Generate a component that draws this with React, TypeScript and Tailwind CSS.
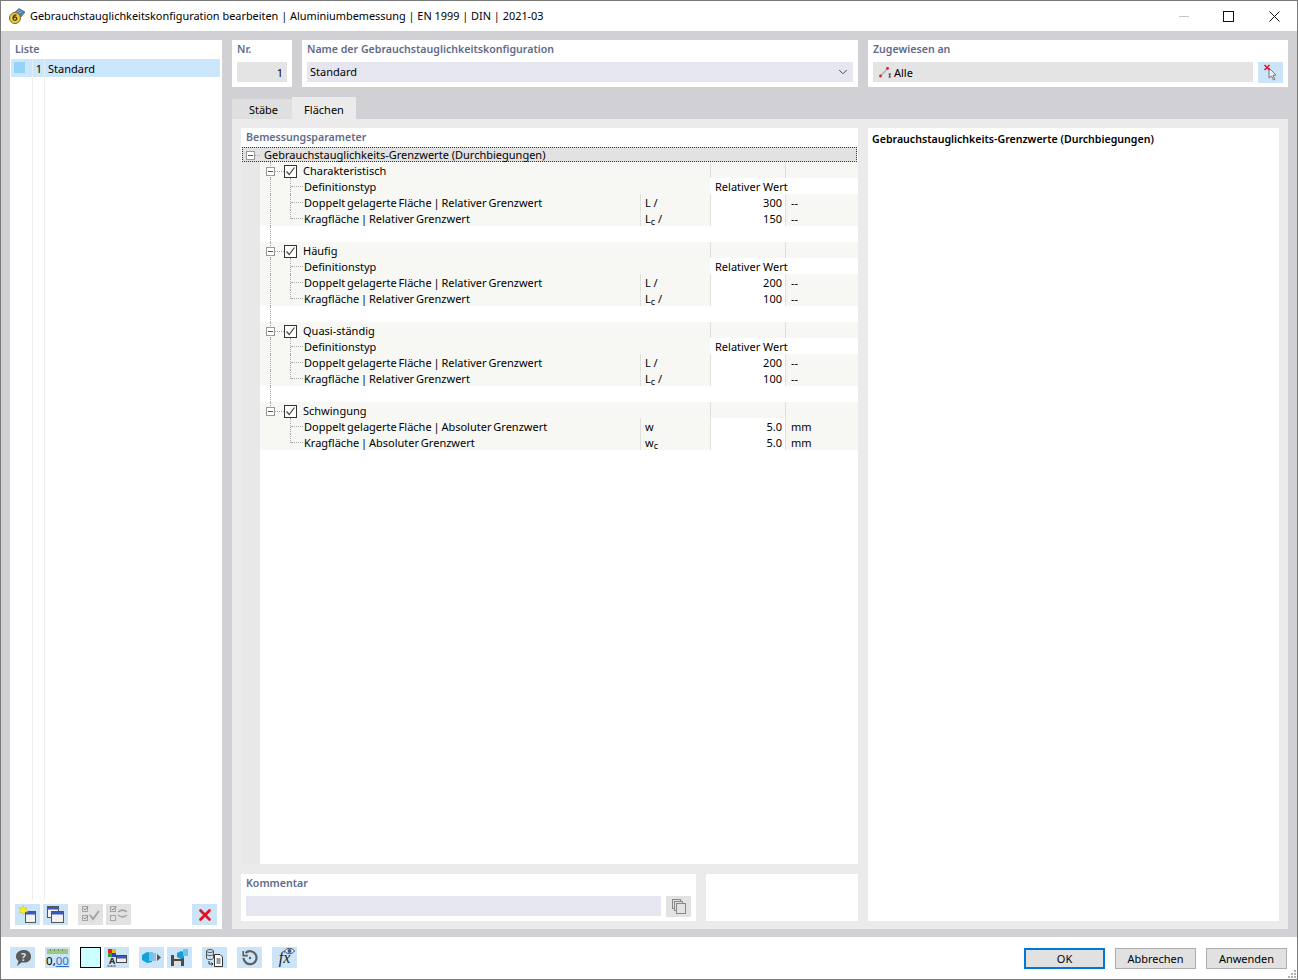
import type { ReactNode } from 'react';
import { ChevronDown, X } from 'lucide-react';

type ParamRow = { label: string; unit?: ReactNode; value?: string; suffix?: string; wide?: boolean };
type Group = { title: string; rows: ParamRow[]; last?: boolean };

const relative = (a: string, b: string): ParamRow[] => [
  { label: 'Definitionstyp', value: 'Relativer Wert', wide: true },
  { label: 'Doppelt gelagerte Fläche | Relativer Grenzwert', unit: 'L /', value: a, suffix: '--' },
  { label: 'Kragfläche | Relativer Grenzwert', unit: <>L<sub className="text-[9px] leading-none">c</sub> /</>, value: b, suffix: '--' },
];

const groups: Group[] = [
  { title: 'Charakteristisch', rows: relative('300', '150') },
  { title: 'Häufig', rows: relative('200', '100') },
  { title: 'Quasi-ständig', rows: relative('200', '100') },
  {
    title: 'Schwingung',
    last: true,
    rows: [
      { label: 'Doppelt gelagerte Fläche | Absoluter Grenzwert', unit: 'w', value: '5.0', suffix: 'mm' },
      { label: 'Kragfläche | Absoluter Grenzwert', unit: <>w<sub className="text-[9px] leading-none">c</sub></>, value: '5.0', suffix: 'mm' },
    ],
  },
];

function PlusBox() {
  return (
    <span className="flex h-[9px] w-[9px] shrink-0 items-center justify-center border border-[#9a9a9a] bg-white">
      <span className="h-px w-[5px] bg-[#555]" />
    </span>
  );
}

function Check() {
  return (
    <span className="flex h-[13px] w-[13px] shrink-0 items-center justify-center border border-[#333] bg-white">
      <svg width="11" height="11" viewBox="0 0 11 11" fill="none" stroke="#444" strokeWidth="1.2">
        <path d="M1.5 5.5 L4.2 8.5 L9.5 1.5" />
      </svg>
    </span>
  );
}

function GroupRow({ title, last }: { title: string; last?: boolean }) {
  return (
    <div className="relative flex h-4 bg-[#f7f8f3]">
      <span className="absolute left-[10px] top-0 h-[4px] border-l border-dotted border-[#aaa]" />
      {!last && <span className="absolute left-[10px] top-[13px] h-[3px] border-l border-dotted border-[#aaa]" />}
      <span className="flex w-[450px] items-center pl-[6px] pt-[2px]">
        <PlusBox />
        <span className="w-[9px] border-t border-dotted border-[#aaa]" />
        <Check />
        <span className="ml-[6px] whitespace-nowrap">{title}</span>
      </span>
      <span className="w-[76px] border-x border-[#dfdfdc]" />
    </div>
  );
}

function DataRow({ row, end, outer }: { row: ParamRow; end: boolean; outer: boolean }) {
  return (
    <div className="flex h-4 bg-[#f7f8f3] leading-[18px]">
      <span className="flex w-[380px] shrink-0">
        <span className={'ml-[10px] w-px ' + (outer ? 'border-l border-dotted border-[#aaa]' : '')} />
        <span className={'ml-[19px] w-px border-l border-dotted border-[#aaa] ' + (end ? 'h-[9px]' : '')} />
        <span className="mr-px mt-2 h-px w-[12px] border-t border-dotted border-[#aaa]" />
        <span className="whitespace-nowrap [word-spacing:-1px]">{row.label}</span>
      </span>
      {row.wide ? (
        <>
          <span className="w-[70px]" />
          <span className="flex-1 whitespace-nowrap bg-white pl-[5px]">{row.value}</span>
        </>
      ) : (
        <>
          <span className="w-[70px] whitespace-nowrap border-l border-[#dfdfdc] pl-1">{row.unit}</span>
          <span className="w-[76px] border-x border-[#dfdfdc] bg-white pr-[3px] text-right">{row.value}</span>
          <span className="pl-[5px]">{row.suffix}</span>
        </>
      )}
    </div>
  );
}

function IconBtn({ children, disabled, className = '' }: { children: ReactNode; disabled?: boolean; className?: string }) {
  return (
    <span className={'flex h-[21px] w-[25px] shrink-0 items-center justify-center ' + (disabled ? 'bg-[#e2e2e2] ' : 'bg-[#cce4f7] ') + className}>
      {children}
    </span>
  );
}

function Win({ x, y, w, h }: { x: number; y: number; w: number; h: number }) {
  return (
    <>
      <rect x={x + 0.5} y={y + 0.5} width={w} height={h} fill="#f2f2f2" stroke="#555" />
      <rect x={x + 1} y={y + 1} width={w - 1} height="2.5" fill="#3f57b5" />
    </>
  );
}

function Btn({ label, primary }: { label: string; primary?: boolean }) {
  return (
    <span className={'mt-px flex h-[21px] w-[81px] items-center justify-center bg-[#e1e1e1] pt-px ' + (primary ? 'border-2 border-[#0078d7]' : 'border border-[#adadad]')}>
      {label}
    </span>
  );
}

export default function App() {
  return (
    <div className="flex h-[980px] w-[1298px] flex-col border border-[#7a7a7a] bg-white text-[11px] leading-4 text-black [font-family:'Noto_Sans',sans-serif]">
      {/* title bar */}
      <header className="flex h-[30px] shrink-0 items-center pl-[8px]">
        <svg width="16" height="16" viewBox="0 0 16 16">
          <path d="M5 5 L10 0.5 L16 4 L12 9 Z" fill="#4f7fa8" stroke="#2f5878" strokeWidth=".6" />
          <path d="M7 5 L11 2 M9 6 L13 3.5" stroke="#a9c8de" strokeWidth=".8" />
          <circle cx="6" cy="10" r="5.5" fill="#eccb3c" stroke="#7a6820" />
          <path d="M7.5 6.8 C5 6.8 4 8.5 4 10.5 C4 12.8 7.8 12.8 7.8 10.6 C7.8 8.8 5 8.8 4.2 10" fill="none" stroke="#333" strokeWidth="1.2" />
        </svg>
        <span className="ml-[5px] text-[10.9px]">Gebrauchstauglichkeitskonfiguration bearbeiten | Aluminiumbemessung | EN 1999 | DIN | 2021-03</span>
        <span className="ml-auto flex items-center">
          <span className="flex w-[45px] justify-center">
            <svg width="10" height="10" viewBox="0 0 10 10"><path d="M0 5.5 H10" stroke="#c4c4c4" /></svg>
          </span>
          <span className="flex w-[45px] justify-center">
            <svg width="11" height="11" viewBox="0 0 11 11"><rect x=".5" y=".5" width="10" height="10" fill="none" stroke="#111" /></svg>
          </span>
          <span className="flex w-[46px] justify-center">
            <svg width="11" height="11" viewBox="0 0 11 11"><path d="M.5 .5 L10.5 10.5 M10.5 .5 L.5 10.5" stroke="#111" /></svg>
          </span>
        </span>
      </header>

      <main className="flex min-h-0 flex-1 gap-[10px] bg-[#d0d0d5] px-[9px] pb-2 pt-[9px]">
        {/* list */}
        <aside className="flex w-[212px] shrink-0 flex-col bg-white">
          <div className="h-[19px] pl-[5px] pt-[1px] text-[10.6px] font-semibold text-[#5f6b8a]">Liste</div>
          <div className="ml-px mr-[2px] flex h-[18px] bg-[#cce6fb] leading-5">
            <span className="ml-[3px] mt-[3px] h-[11px] w-[11px] bg-[#92d5f7]" />
            <span className="ml-[7px] w-[13px] border-x border-[#e6eef5] pr-[2px] text-right">1</span>
            <span className="ml-[3px]">Standard</span>
          </div>
          <div className="relative flex-1">
            <span className="absolute bottom-[5px] left-[22px] top-0 w-px bg-[#ececec]" />
            <span className="absolute bottom-[5px] left-[34px] top-0 w-px bg-[#ececec]" />
          </div>
          <div className="flex items-center pb-[4px] pl-[5px] pr-[5px]">
            <IconBtn>
              <svg width="25" height="21" viewBox="0 0 25 21">
                <Win x={10} y={7} w={10} h={11} />
                <path d="M8 1.5 L9.2 4.2 L12 3.4 L10.8 6 L12.8 8 L10 8 L8.6 10.8 L7.2 8.4 L4.4 8.8 L5.8 6.2 L4 3.6 L6.8 4.2 Z" fill="#f6f01c" stroke="#c4bb10" strokeWidth=".5" />
              </svg>
            </IconBtn>
            <IconBtn className="ml-[3px]">
              <svg width="25" height="21" viewBox="0 0 25 21">
                <Win x={4} y={2} w={11} h={11} />
                <Win x={8} y={7} w={12} h={11} />
              </svg>
            </IconBtn>
            <IconBtn disabled className="ml-[10px]">
              <svg width="25" height="21" viewBox="0 0 25 21" fill="none" stroke="#a4a4a4">
                <rect x="4.5" y="2.5" width="5" height="5" /><rect x="4.5" y="11.5" width="5" height="5" />
                <path d="M5.5 4.5 L7 6 L10 2.5 M5.5 13.5 L7 15 L10 11.5" stroke="#888" />
                <path d="M12 11 L15 15 L21 7" strokeWidth="2" />
              </svg>
            </IconBtn>
            <IconBtn disabled className="ml-[3px]">
              <svg width="25" height="21" viewBox="0 0 25 21" fill="none" stroke="#a4a4a4">
                <rect x="4.5" y="2.5" width="5" height="5" /><rect x="4.5" y="11.5" width="5" height="5" />
                <path d="M5.5 4.5 L7 6 L10 2.5" stroke="#888" />
                <path d="M12 8 C15 5.5 18 5.5 21 8 M21 11 C18 13.5 15 13.5 12 11" strokeWidth="1.5" />
              </svg>
            </IconBtn>
            <IconBtn className="ml-auto">
              <X size={18} strokeWidth={3.6} className="text-[#e8101c]" />
            </IconBtn>
          </div>
        </aside>

        <section className="flex min-w-0 flex-1 flex-col">
          {/* top fields */}
          <div className="flex h-[47px] gap-[10px]">
            <div className="w-[60px] bg-white px-[5px]">
              <div className="h-[22px] pt-[1px] text-[10.6px] font-semibold text-[#5f6b8a]">Nr.</div>
              <div className="h-[20px] bg-[#e4e4e4] pr-[4px] pt-[3px] text-right">1</div>
            </div>
            <div className="w-[556px] bg-white px-[5px]">
              <div className="h-[22px] pt-[1px] text-[10.6px] font-semibold text-[#5f6b8a]">Name der Gebrauchstauglichkeitskonfiguration</div>
              <div className="flex h-[20px] items-center justify-between bg-[#e6e6f1] pl-[3px] pr-[3px]">
                <span>Standard</span>
                <ChevronDown size={14} strokeWidth={1.5} className="text-[#333]" />
              </div>
            </div>
            <div className="flex-1 bg-white px-[5px]">
              <div className="h-[22px] pt-[1px] text-[10.6px] font-semibold text-[#5f6b8a]">Zugewiesen an</div>
              <div className="flex h-[21px] gap-[5px]">
                <div className="flex h-[20px] flex-1 items-center bg-[#e4e4e4] pl-[6px]">
                  <svg width="12" height="12" viewBox="0 0 12 12">
                    <path d="M1.5 10 L9 2" stroke="#a8b0c0" strokeWidth="1.5" />
                    <circle cx="1.5" cy="10" r="1.4" fill="#e0202a" /><circle cx="8.5" cy="2.5" r="1.4" fill="#e0202a" />
                    <path d="M9.5 8 H12 M10.7 8 V11 M9.5 11 H12" stroke="#444" />
                  </svg>
                  <span className="ml-[3px] pt-[2px]">Alle</span>
                </div>
                <span className="flex w-[25px] items-center justify-center bg-[#cce4f7]">
                  <svg width="16" height="17" viewBox="0 0 16 17">
                    <path d="M6 4 L6 14 L8.5 12 L10.5 16 L12 15 L10 11.5 L13 11 Z" fill="#eee" stroke="#777" />
                    <path d="M1.5 1 L6.5 6 M6.5 1 L1.5 6" stroke="#e8101c" strokeWidth="1.5" />
                  </svg>
                </span>
              </div>
            </div>
          </div>

          {/* tabs */}
          <div className="mt-[10px] flex h-[22px] shrink-0 items-end">
            <span className="flex h-[20px] w-[60px] justify-center bg-[#dfdfdf] pl-[3px] pt-[3px]">Stäbe</span>
            <span className="flex h-[22px] w-[64px] justify-center bg-[#ebebeb] pt-[5px]">Flächen</span>
          </div>

          <div className="flex min-h-0 flex-1 gap-[10px] bg-[#ebebeb] pb-2 pl-[9px] pr-[9px] pt-[9px]">
            <div className="flex w-[617px] shrink-0 flex-col gap-[10px]">
              {/* parameter tree */}
              <div className="flex min-h-0 flex-1 flex-col bg-white">
                <div className="h-[19px] shrink-0 pl-[5px] pt-[1px] text-[10.6px] font-semibold text-[#5f6b8a]">Bemessungsparameter</div>
                <div className="mx-px flex h-[15px] shrink-0 items-center border border-dotted border-[#333] bg-[#e2e2e2] pl-[3px] pt-px">
                  <PlusBox />
                  <span className="w-[5px] border-t border-dotted border-[#aaa]" />
                  <span className="ml-[4px] whitespace-nowrap">Gebrauchstauglichkeits-Grenzwerte (Durchbiegungen)</span>
                </div>
                <div className="flex min-h-0 flex-1">
                  <div className="w-[19px] shrink-0 bg-[#e8e8e8]" />
                  <div className="min-w-0 flex-1">
                    {groups.map((g) => (
                      <div key={g.title}>
                        <GroupRow title={g.title} last={g.last} />
                        {g.rows.map((r, i) => (
                          <DataRow key={r.label} row={r} end={i === g.rows.length - 1} outer={!g.last} />
                        ))}
                        {!g.last && <div className="ml-[10px] h-4 w-px border-l border-dotted border-[#aaa]" />}
                      </div>
                    ))}
                  </div>
                </div>
              </div>
              {/* comment */}
              <div className="flex h-[47px] shrink-0 gap-[10px]">
                <div className="w-[455px] bg-white px-[5px]">
                  <div className="h-[22px] pt-[1px] text-[10.6px] font-semibold text-[#5f6b8a]">Kommentar</div>
                  <div className="flex gap-[5px]">
                    <div className="h-[20px] w-[415px] bg-[#e6e6f1]" />
                    <span className="flex h-[21px] w-[25px] items-center justify-center bg-[#e2e2e2]">
                      <svg width="14" height="15" viewBox="0 0 14 15" fill="none" stroke="#888">
                        <rect x="0.5" y="0.5" width="8" height="9" />
                        <rect x="2.5" y="2.5" width="8" height="9" fill="#e2e2e2" />
                        <rect x="4.5" y="4.5" width="9" height="10" fill="#e2e2e2" />
                      </svg>
                    </span>
                  </div>
                </div>
                <div className="flex-1 bg-white" />
              </div>
            </div>
            <div className="flex-1 bg-white pl-[4px] pt-[3px] text-[10.6px] font-semibold">Gebrauchstauglichkeits-Grenzwerte (Durchbiegungen)</div>
          </div>
        </section>
      </main>

      {/* footer */}
      <footer className="relative flex h-[42px] shrink-0 items-start pl-[9px] pr-[10px] pt-[10px]">
        <IconBtn>
          <svg width="18" height="18" viewBox="0 0 18 18">
            <path d="M10 1 C14 1 17 3.5 17 7.5 C17 11.5 14 13.5 10 13.5 L7.5 13.5 L3 17 L4.5 12 C2.8 10.8 2 9.5 2 7.5 C2 3.5 5.5 1 10 1 Z" fill="#5a5a5a" />
            <text x="9.5" y="11.5" fontSize="10.5" fontWeight="700" fill="#cce4f7" textAnchor="middle">?</text>
          </svg>
        </IconBtn>
        <IconBtn className="ml-[10px]">
          <span className="flex flex-col items-center leading-none">
            <svg width="21" height="5" viewBox="0 0 21 5">
              <rect width="21" height="5" fill="#9cc77f" />
              <path d="M3.5 0 V2 M7.5 0 V2 M11.5 0 V2 M15.5 0 V2" stroke="#6c9a50" />
            </svg>
            <span className="mt-[1px] text-[11.5px] leading-[12px]">0,<span className="text-[#2f6fd0] underline">00</span></span>
          </span>
        </IconBtn>
        <span className="ml-[10px] h-[21px] w-[21px] shrink-0 border border-black bg-[#ccffff]" />
        <IconBtn className="ml-[3px]">
          <svg width="25" height="21" viewBox="0 0 25 21">
            <rect x="4" y="2" width="4" height="4" fill="#d22" /><rect x="8" y="2" width="4" height="4" fill="#d9c020" />
            <rect x="4" y="6" width="4" height="4" fill="#2a2" /><rect x="8" y="6" width="4" height="4" fill="#2a3fd0" />
            <text x="8" y="17" fontSize="9" fontWeight="700" fill="#222" textAnchor="middle">A</text>
            <path d="M3.5 19 H12.5" stroke="#222" strokeDasharray="2 1" />
            <rect x="12.5" y="8.5" width="10" height="7" fill="#eee" stroke="#444" /><rect x="13" y="9" width="9" height="2.5" fill="#3f57b5" />
          </svg>
        </IconBtn>
        <IconBtn className="ml-[10px]">
          <svg width="25" height="21" viewBox="0 0 25 21">
            <path d="M3 8 L8 5 L13 6 L13 15 L8 16 L3 13 Z" fill="#14a0dc" />
            <rect x="10" y="5" width="4" height="9" fill="#6cc3ec" />
            <rect x="14" y="6" width="3" height="8" fill="#a4bccb" />
            <path d="M18 7 L22 10.5 L18 14 Z" fill="#555" />
          </svg>
        </IconBtn>
        <IconBtn className="ml-[3px]">
          <svg width="25" height="21" viewBox="0 0 25 21">
            <path d="M4 8 H15 L17 10 V19 H4 Z" fill="#4a4a4a" />
            <rect x="7" y="8" width="7" height="4" fill="#ddd" /><rect x="7" y="14" width="7" height="5" fill="#ddd" />
            <path d="M10 6 L14 4 L17 5 L17 11 L14 12 L10 10 Z" fill="#14a0dc" />
            <rect x="16" y="2" width="5" height="7" fill="#6cc3ec" />
          </svg>
        </IconBtn>
        <IconBtn className="ml-[10px]">
          <svg width="25" height="21" viewBox="0 0 25 21" fill="none" stroke="#555">
            <ellipse cx="8" cy="4" rx="3.5" ry="1.5" /><path d="M4.5 4 V11 C4.5 13 11.5 13 11.5 11 V4 M4.5 7 C4.5 9 11.5 9 11.5 7" />
            <path d="M12.5 7.5 H18 L20.5 10 V19.5 H12.5 Z" fill="#fff" stroke="#333" /><path d="M14.5 12 H18.5 M14.5 14 H18.5 M14.5 16 H18.5" stroke="#333" />
            <path d="M7 14 V17 H11 M9.5 15.5 L11 17 L9.5 18.5" stroke="#333" />
          </svg>
        </IconBtn>
        <IconBtn className="ml-[10px]">
          <svg width="18" height="18" viewBox="0 0 18 18" fill="none" stroke="#5f5f5f" strokeWidth="2.2">
            <path d="M4.5 4 A6.5 6.5 0 1 1 2.5 9" /><path d="M2.2 2 V6.6 H6.8" strokeWidth="1.6" /><circle cx="9" cy="9" r="1.2" fill="#5f5f5f" stroke="none" />
          </svg>
        </IconBtn>
        <IconBtn className="ml-[10px]">
          <span className="relative font-['Liberation_Serif',serif] text-[16px] italic leading-none text-[#222]">
            fx
            <svg className="absolute -right-[5px] -top-[3px]" width="11" height="8" viewBox="0 0 11 8">
              <path d="M0.5 4 C3 0.5 8 0.5 10.5 4 C8 7.5 3 7.5 0.5 4 Z" fill="#fff" stroke="#444" /><circle cx="5.5" cy="4" r="2" fill="#2a5fa8" />
            </svg>
          </span>
        </IconBtn>
        <span className="ml-auto flex gap-[10px]">
          <Btn label="OK" primary />
          <Btn label="Abbrechen" />
          <Btn label="Anwenden" />
        </span>
        <svg className="absolute bottom-0 right-0" width="9" height="9" viewBox="0 0 9 9" fill="#b0b0b0">
          <rect x="6" y="0" width="2" height="2" /><rect x="3" y="3" width="2" height="2" /><rect x="6" y="3" width="2" height="2" />
          <rect x="0" y="6" width="2" height="2" /><rect x="3" y="6" width="2" height="2" /><rect x="6" y="6" width="2" height="2" />
        </svg>
      </footer>
    </div>
  );
}
